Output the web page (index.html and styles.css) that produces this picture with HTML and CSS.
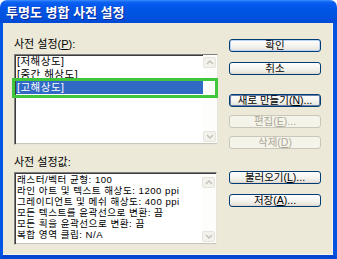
FILE: index.html
```html
<!DOCTYPE html>
<html lang="ko">
<head>
<meta charset="utf-8">
<title>투명도 병합 사전 설정</title>
<link rel="stylesheet" href="styles.css">
</head>
<body>
<div class="window">
  <div class="titlebar"><span class="title">투명도 병합 사전 설정</span></div>
  <div class="body">
    <div class="left">
      <div class="label">사전 설정(<u>P</u>):</div>
      <div class="listwrap">
        <div class="listbox">
          <div class="items">
            <div class="item">[저해상도]</div>
            <div class="item">[중간 해상도]</div>
            <div class="item selected">[고해상도]</div>
          </div>
          <div class="scrollbar">
            <div class="sbtn"><svg width="8" height="5" viewBox="0 0 8 5"><path d="M1 4 L4 1 L7 4" fill="none" stroke="#c3c1b6" stroke-width="1.4"/></svg></div>
            <div class="track"></div>
            <div class="sbtn"><svg width="8" height="5" viewBox="0 0 8 5"><path d="M1 1 L4 4 L7 1" fill="none" stroke="#c3c1b6" stroke-width="1.4"/></svg></div>
          </div>
        </div>
        <div class="highlight"></div>
      </div>
      <div class="label values-label">사전 설정값:</div>
      <div class="valuesbox">
        <div class="lines">
          <div class="line">래스터/벡터 균형: 100</div>
          <div class="line">라인 아트 및 텍스트 해상도: 1200 ppi</div>
          <div class="line">그레이디언트 및 메쉬 해상도: 400 ppi</div>
          <div class="line">모든 텍스트를 윤곽선으로 변환: 끔</div>
          <div class="line">모든 획을 윤곽선으로 변환: 끔</div>
          <div class="line">복합 영역 클립: N/A</div>
        </div>
        <div class="scrollbar small">
          <div class="sbtn"><svg width="8" height="5" viewBox="0 0 8 5"><path d="M1 4 L4 1 L7 4" fill="none" stroke="#c3c1b6" stroke-width="1.4"/></svg></div>
          <div class="track"></div>
          <div class="sbtn"><svg width="8" height="5" viewBox="0 0 8 5"><path d="M1 1 L4 4 L7 1" fill="none" stroke="#c3c1b6" stroke-width="1.4"/></svg></div>
        </div>
      </div>
    </div>
    <div class="right">
      <div class="group">
        <div class="btn default">확인</div>
        <div class="btn">취소</div>
      </div>
      <div class="group g2">
        <div class="btn focused">새로 만들기(<u>N</u>)...</div>
        <div class="btn disabled">편집(<u>E</u>)...</div>
        <div class="btn disabled">삭제(<u>D</u>)</div>
      </div>
      <div class="group g3">
        <div class="btn">불러오기(<u>L</u>)...</div>
        <div class="btn">저장(<u>A</u>)...</div>
      </div>
    </div>
  </div>
</div>
</body>
</html>
```
FILE: styles.css
```css
html, body {
  margin: 0;
  padding: 0;
  background: #ffffff;
}
body {
  font-family: "Liberation Sans", "Noto Sans CJK KR", sans-serif;
  color: #000;
}
.window {
  width: 337px;
  height: 259px;
  display: flex;
  flex-direction: column;
  box-sizing: border-box;
}
.titlebar {
  height: 23px;
  flex: none;
  border-radius: 7px 7px 0 0;
  background: linear-gradient(to bottom, #3d8dff 0, #0d63f3 2px, #0659ee 5px, #0054e3 45%, #0052df 75%, #0049d3 100%);
  display: flex;
  align-items: center;
  padding-left: 6px;
  padding-top: 1px;
  box-sizing: border-box;
}
.title {
  color: #fff;
  font-weight: bold;
  font-size: 13px;
  line-height: 15px;
  text-shadow: 1px 1px 0 #0b2a9a;
}
.body {
  flex: 1;
  display: flex;
  background: #ece9d8;
  border-left: 3px solid #0055e5;
  border-right: 4px solid #0052df;
  border-bottom: 4px solid #0046d0;
  box-shadow: inset -1px -1px 0 #f6f5ee;
  padding: 15px 0 0 11px;
  gap: 11px;
}
.left {
  width: 204px;
  display: flex;
  flex-direction: column;
}
.label {
  font-size: 11px;
  line-height: 12px;
  height: 12px;
  white-space: nowrap;
}
.listwrap {
  position: relative;
  margin-top: 4px;
}
.listbox, .valuesbox {
  display: flex;
  background: #fff;
  border: 1px solid;
  border-color: #7f7f7f #e8e6dc #e8e6dc #7f7f7f;
  box-shadow: inset 1px 1px 0 #3c3c3c, inset -1px -1px 0 #c9c6b8;
  box-sizing: border-box;
}
.listbox {
  height: 91px;
  padding: 0 0 1px 1px;
}
.items {
  flex: 1;
}
.item {
  height: 13px;
  font-size: 10.5px;
  line-height: 13px;
  letter-spacing: 0.5px;
  padding-left: 1px;
  white-space: nowrap;
}
.item.selected {
  background: #316ac5;
  color: #fff;
}
.scrollbar {
  width: 14px;
  display: flex;
  flex-direction: column;
  padding: 2px 1px 1px 0;
  box-sizing: border-box;
  background: #fdfdfb;
}
.scrollbar .track {
  flex: 1;
}
.sbtn {
  height: 11px;
  border: 1px solid #e6e4da;
  border-radius: 2px;
  background: #f3f2ec;
  display: flex;
  align-items: center;
  justify-content: center;
  box-sizing: border-box;
}
.highlight {
  position: absolute;
  left: -2px;
  top: 24px;
  width: 206px;
  height: 20px;
  border: 3px solid #3fc63a;
  box-sizing: border-box;
}
.values-label {
  margin-top: 11px;
}
.valuesbox {
  margin-top: 4px;
  height: 73px;
  width: 203px;
  padding: 1px 0 1px 2px;
}
.lines {
  flex: 1;
}
.line {
  height: 11px;
  font-size: 9.6px;
  line-height: 11px;
  letter-spacing: 0.5px;
  white-space: nowrap;
}
.scrollbar.small {
  padding-top: 3px;
}
.right {
  width: 92px;
  display: flex;
  flex-direction: column;
  padding-top: 1px;
}
.group {
  display: flex;
  flex-direction: column;
  gap: 10px;
}
.group.g2 {
  margin-top: 19px;
  gap: 8px;
}
.group.g3 {
  margin-top: 22px;
}
.btn {
  height: 13px;
  box-sizing: border-box;
  border: 1px solid #003c74;
  border-radius: 3px;
  background: linear-gradient(to bottom, #ffffff 0, #f5f4ef 50%, #e9e7df 85%, #d8d3c8 100%);
  font-size: 10.5px;
  line-height: 11px;
  text-align: center;
  white-space: nowrap;
}
.btn.default {
  box-shadow: inset 0 0 0 1px #bcd2f7;
}
.btn.focused {
  box-shadow: inset 0 0 0 1px #6a7fa8;
}
.btn.disabled {
  border-color: #c9c7ba;
  background: #f5f4ea;
  color: #aca899;
}
```
